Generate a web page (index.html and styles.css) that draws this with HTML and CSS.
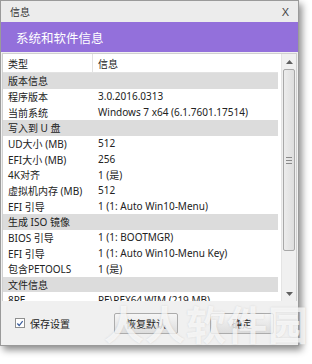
FILE: index.html
```html
<!DOCTYPE html>
<html lang="zh-CN">
<head>
    <meta charset="UTF-8">
    <title>信息</title>
    <link rel="stylesheet" href="styles.css">
</head>
<body>
    <div class="window">
        <!-- Title bar -->
        <div class="titlebar">
            <span class="title">信息</span>
            <span class="close">X</span>
        </div>

        <!-- Banner -->
        <div class="banner">系统和软件信息</div>

        <!-- List -->
        <div class="list">
            <div class="table">
                <div class="row head">
                    <span class="col-type">类型</span>
                    <span class="col-info">信息</span>
                </div>
                <div class="row group"><span class="col-type">版本信息</span></div>
                <div class="row"><span class="col-type">程序版本</span><span class="col-info">3.0.2016.0313</span></div>
                <div class="row"><span class="col-type">当前系统</span><span class="col-info">Windows 7 x64 (6.1.7601.17514)</span></div>
                <div class="row group"><span class="col-type">写入到 U 盘</span></div>
                <div class="row"><span class="col-type">UD大小 (MB)</span><span class="col-info">512</span></div>
                <div class="row"><span class="col-type">EFI大小 (MB)</span><span class="col-info">256</span></div>
                <div class="row"><span class="col-type">4K对齐</span><span class="col-info">1 (是)</span></div>
                <div class="row"><span class="col-type">虚拟机内存 (MB)</span><span class="col-info">512</span></div>
                <div class="row"><span class="col-type">EFI 引导</span><span class="col-info">1 (1: Auto Win10-Menu)</span></div>
                <div class="row group"><span class="col-type">生成 ISO 镜像</span></div>
                <div class="row"><span class="col-type">BIOS 引导</span><span class="col-info">1 (1: BOOTMGR)</span></div>
                <div class="row"><span class="col-type">EFI 引导</span><span class="col-info">1 (1: Auto Win10-Menu Key)</span></div>
                <div class="row"><span class="col-type">包含PETOOLS</span><span class="col-info">1 (是)</span></div>
                <div class="row group"><span class="col-type">文件信息</span></div>
                <div class="row"><span class="col-type">8PE</span><span class="col-info">PE\PEX64.WIM (219 MB)</span></div>
            </div>
            <div class="scrollbar">
                <div class="arrow">
                    <svg width="7" height="4" viewBox="0 0 7 4"><path d="M0 4 L3.5 0 L7 4 Z" fill="#606060"/></svg>
                </div>
                <div class="track">
                    <div class="thumb">
                        <span class="grip"></span>
                        <span class="grip"></span>
                        <span class="grip"></span>
                    </div>
                </div>
                <div class="arrow">
                    <svg width="7" height="4" viewBox="0 0 7 4"><path d="M0 0 L3.5 4 L7 0 Z" fill="#606060"/></svg>
                </div>
            </div>
        </div>

        <!-- Footer -->
        <div class="footer">
            <label class="check">
                <span class="box">
                    <svg width="9" height="9" viewBox="0 0 9 9"><path d="M1.5 4.5 L3.6 6.8 L7.5 1.8" fill="none" stroke="#3b5d9c" stroke-width="1.4"/></svg>
                </span>
                <span>保存设置</span>
            </label>
            <div class="buttons">
                <button class="button">恢复默认</button>
                <button class="button">确定</button>
            </div>
        </div>
    </div>

    <div class="watermark">人人软件园</div>
</body>
</html>
```

FILE: styles.css
```css
* {
    margin: 0;
    padding: 0;
    box-sizing: border-box;
}

body {
    width: 312px;
    height: 364px;
    background: #ffffff;
    font-family: "Noto Sans", "Noto Sans CJK SC", sans-serif;
    font-size: 10px;
    color: #222222;
    position: relative;
    overflow: hidden;
}

.window {
    width: 299px;
    height: 346px;
    display: flex;
    flex-direction: column;
    background: #f0f0f0;
    border: 1px solid #9a9a9a;
    box-shadow: 3px 4px 7px rgba(0, 0, 0, 0.45);
}

.titlebar {
    height: 21px;
    display: flex;
    align-items: center;
    justify-content: space-between;
    padding: 0 9px 0 9px;
    background: #ececec;
    font-family: "Noto Sans CJK SC", sans-serif;
    font-size: 10px;
    color: #333333;
}

.close {
    font-family: "Liberation Sans", sans-serif;
    font-size: 11px;
    color: #444444;
}

.banner {
    height: 30px;
    display: flex;
    align-items: center;
    padding-left: 15px;
    background: #9370db;
    color: #ffffff;
    font-family: "Noto Sans CJK SC", sans-serif;
    font-size: 12.5px;
}

.list {
    height: 248px;
    margin: 1px 1px 0 1px;
    display: flex;
    background: #ffffff;
    border: 1px solid #d0d0d0;
    border-bottom: none;
}

.table {
    flex: 1;
    overflow: hidden;
}

.row {
    height: 15.67px;
    display: flex;
    align-items: center;
    white-space: nowrap;
}

.row.head {
    height: 19px;
    border-bottom: 1px solid #e2e2e2;
}

.row.group {
    background: #dcdcdc;
}

.col-type {
    width: 90px;
    padding-left: 5px;
    flex-shrink: 0;
}

.col-info {
    padding-left: 5px;
}

.row.head .col-type {
    height: 100%;
    display: flex;
    align-items: center;
    border-right: 1px solid #e2e2e2;
}

.scrollbar {
    width: 15px;
    margin-left: 3px;
    display: flex;
    flex-direction: column;
    background: #f0f0f0;
    border-left: 1px solid #e4e4e4;
}

.arrow {
    height: 15px;
    display: flex;
    align-items: center;
    justify-content: center;
}

.track {
    flex: 1;
    padding: 0 1px;
}

.thumb {
    height: 182px;
    display: flex;
    flex-direction: column;
    align-items: center;
    justify-content: center;
    gap: 2px;
    background: linear-gradient(to right, #ececec, #dedede);
    border: 1px solid #a8a8a8;
    border-radius: 2px;
}

.grip {
    width: 6px;
    height: 1px;
    background: #8a8a8a;
}

.footer {
    flex: 1;
    display: flex;
    align-items: center;
    justify-content: space-between;
    padding: 0 24px 0 14px;
    font-family: "Noto Sans CJK SC", sans-serif;
    font-size: 10px;
    color: #222222;
}

.check {
    display: flex;
    align-items: center;
    gap: 5px;
}

.box {
    width: 10px;
    height: 10px;
    display: flex;
    align-items: center;
    justify-content: center;
    background: #ffffff;
    border: 1px solid #8e8f8f;
}

.buttons {
    display: flex;
    gap: 32px;
}

.button {
    width: 64px;
    height: 21px;
    font-family: "Noto Sans CJK SC", sans-serif;
    font-size: 10px;
    color: #222222;
    background: linear-gradient(#f6f6f6, #dddddd);
    border: 1px solid #acacac;
    border-radius: 2px;
}

.watermark {
    position: absolute;
    left: 104px;
    top: 294px;
    font-family: "Noto Sans CJK SC", sans-serif;
    font-size: 40px;
    font-weight: 700;
    letter-spacing: 1px;
    color: rgba(255, 255, 255, 0.72);
    text-shadow: 0 0 2px rgba(150, 150, 150, 0.3);
}
```
